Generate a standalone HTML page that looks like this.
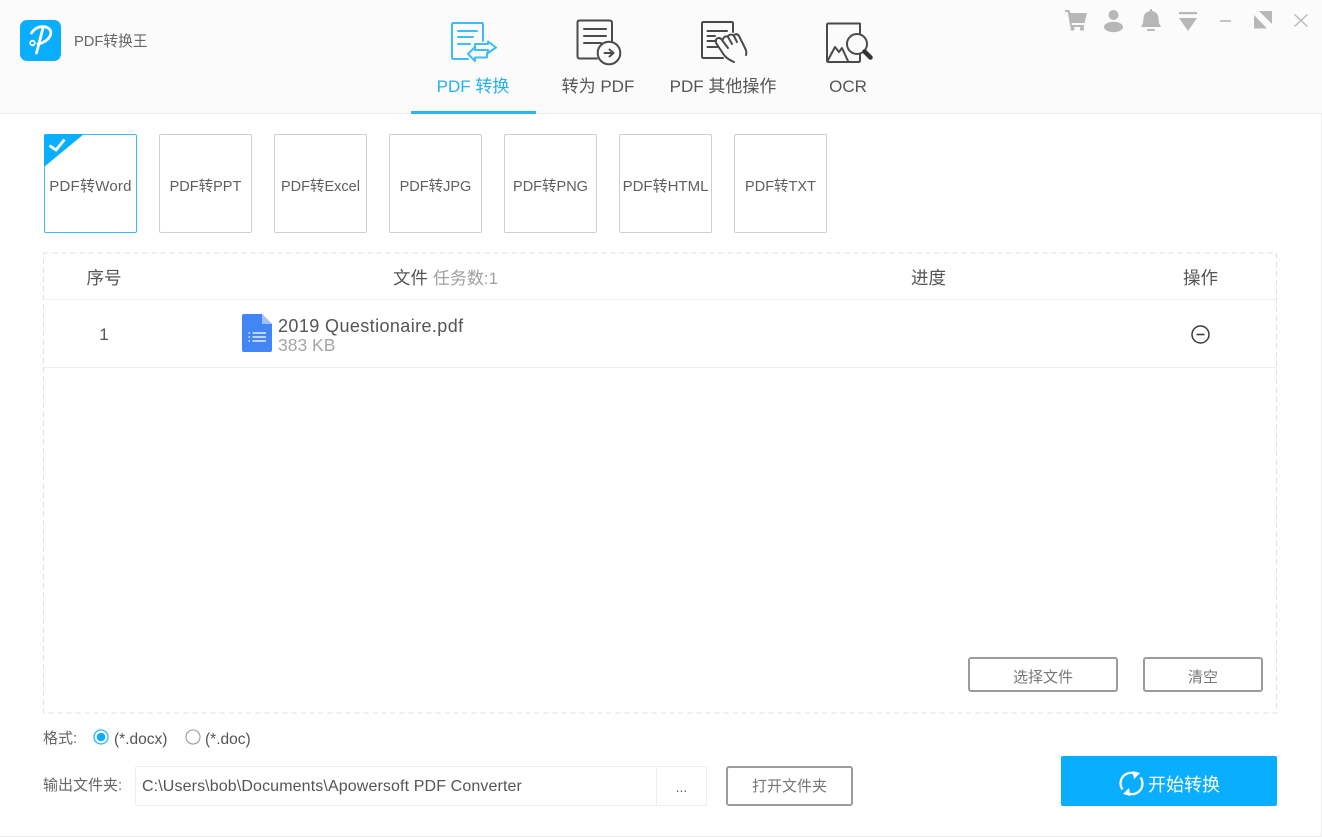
<!DOCTYPE html>
<html lang="zh"><head><meta charset="utf-8"><title>PDF转换王</title>
<style>
html,body{margin:0;padding:0;background:#fff}
body{width:1322px;height:837px;position:relative;overflow:hidden;font-family:"Liberation Sans","Noto Sans CJK SC",sans-serif;color:#555}
#w{position:absolute;left:0;top:0;width:1322px;height:837px;filter:blur(.3px)}
.a{position:absolute;white-space:nowrap}
.c{text-align:center}
.card{position:absolute;top:134px;width:91px;height:97px;border:1px solid #d0d0d0;border-radius:2px;background:#fff;text-align:center;line-height:103px;font-size:14.500px;color:#5f5f5f;white-space:nowrap;box-sizing:content-box}
.card span{position:relative;top:1px}
.btn{position:absolute;box-sizing:border-box;border:2px solid #9c9c9c;border-radius:3px;background:#fff;text-align:center;color:#777;font-size:15px}
svg{position:absolute;overflow:visible}
.s{fill:none;stroke:#4a4a4a;stroke-width:2;stroke-linecap:round;stroke-linejoin:round}
.b{fill:none;stroke:#3dbcf5;stroke-width:2;stroke-linecap:round;stroke-linejoin:round}
.g{fill:#b7b7b7}
.t{top:76px;width:124px;font-size:17px;line-height:22px;color:#555}
.h{top:267px;font-size:17.500px;line-height:22px;color:#555}
</style></head><body><div id="w">

<div class="a" style="left:0;top:0;width:1322px;height:113px;background:#fbfbfb;border-bottom:1px solid #ececec"></div>

<!-- logo -->
<svg style="left:20px;top:20px" width="41" height="41" viewBox="0 0 41 41">
<rect width="41" height="41" rx="7" fill="#0aaeff"/>
<path d="M11.500 13Q17 5 26 7Q33 10 30 16Q27 22 18 24M23 8L16.500 33" fill="none" stroke="#fff" stroke-width="2.800" stroke-linecap="round"/>
<circle cx="12.500" cy="23" r="2.300" fill="none" stroke="#fff" stroke-width="1.800"/>
</svg>
<div class="a" style="left:74px;top:33px;font-size:14.700px;line-height:18px;color:#666">PDF转换王</div>

<!-- tab icons -->
<svg style="left:450px;top:22px" width="48" height="42" viewBox="0 0 48 42">
<path class="b" d="M33 19V2.500Q33 1 31.500 1H3.500Q2 1 2 2.500V35.500Q2 37 3.500 37H18"/>
<path class="b" d="M8 9H27M8 15H23M8 22H20"/>
<path class="b" d="M25 28V22H38V19.500L46 25.500L38 31V28H25"/>
<path class="b" d="M25 28V25L18 32L25 39V35.500H37V31"/>
</svg>
<svg style="left:576px;top:19px" width="46" height="46" viewBox="0 0 46 46">
<path class="s" d="M36 22V4Q36 1.500 33.500 1.500H3.500Q1.500 1.500 1.500 3.500V37Q1.500 39.500 3.500 39.500H21"/>
<path class="s" d="M8 10H30M8 17H30M8 24H25"/>
<circle cx="33" cy="34" r="11.300" fill="#fbfbfb" stroke="#4a4a4a" stroke-width="2"/>
<path class="s" d="M28.500 34H37M33.500 30.500L37.500 34L33.500 37.500"/>
</svg>
<svg style="left:701px;top:21px" width="46" height="42" viewBox="0 0 46 42">
<path class="s" d="M32 11V2.500Q32 1 30.500 1H2.500Q1 1 1 2.500V35.500Q1 37 2.500 37H22"/>
<path class="s" d="M6.500 10H26M6.500 15H14M6.500 20H15M6.500 26H17"/>
<path class="s" d="M33 41Q26 38 23 34L15 22Q14 19 16 17.500Q19 16 21 19L27 27M22 18Q24 14 27 16L31 23M27 15Q30 12 33 15L36 21M33 14Q36 12 38 15L44 27Q46 31 45 34"/>
</svg>
<svg style="left:826px;top:22px" width="48" height="42" viewBox="0 0 48 42">
<path class="s" d="M34 1.500H2.500Q1 1.500 1 3V38.500Q1 40 2.500 40H32.500Q34 40 34 38.500V30M34 1.500V11"/>
<path class="s" d="M1.500 39L9 25L13 30L16 26L22 39"/>
<circle cx="31" cy="22" r="10" fill="#fbfbfb" stroke="#4a4a4a" stroke-width="2"/>
<path d="M38.500 29.500L44.500 35.500" stroke="#333" stroke-width="4.500" stroke-linecap="round"/>
</svg>

<!-- tab labels -->
<div class="a c t" style="left:411px;color:#24b0f2">PDF 转换</div>
<div class="a c t" style="left:536px">转为 PDF</div>
<div class="a c t" style="left:661px">PDF 其他操作</div>
<div class="a c t" style="left:786px">OCR</div>
<div class="a" style="left:411px;top:111px;width:125px;height:3px;background:#2cb5f5"></div>

<!-- window controls -->
<svg style="left:1064px;top:9px" width="24" height="22" viewBox="0 0 24 22">
<path class="g" d="M1 1H5.500L6.500 4H23L20.500 14H7.500L8 16H20V18H6.300L3.800 3H1Z"/>
<circle class="g" cx="8.500" cy="19.700" r="2"/><circle class="g" cx="18" cy="19.700" r="2"/>
</svg>
<svg style="left:1103px;top:9px" width="21" height="23" viewBox="0 0 21 23">
<circle class="g" cx="10.500" cy="6" r="5"/>
<ellipse class="g" cx="10.500" cy="18" rx="9.500" ry="5.200"/>
</svg>
<svg style="left:1140px;top:8px" width="22" height="24" viewBox="0 0 22 24">
<path class="g" d="M10 1H12V3Q18 4 18.500 10L19 15L21 19H1L3 15L3.500 10Q4 4 10 3Z"/>
<rect class="g" x="7" y="21" width="8" height="2" rx="1"/>
</svg>
<svg style="left:1178px;top:11px" width="20" height="20" viewBox="0 0 20 20">
<rect class="g" x="1" y="1" width="18" height="2.200"/>
<path class="g" d="M1 7H19L10 20Z"/>
</svg>
<div class="a" style="left:1220px;top:20px;width:11px;height:1.500px;background:#c4c4c4"></div>
<svg style="left:1254px;top:10px" width="19" height="19" viewBox="0 0 19 19">
<path class="g" d="M5 1H18V14ZM0 5L13 18.500H0Z"/>
</svg>
<svg style="left:1294px;top:14px" width="14" height="13" viewBox="0 0 14 13">
<path d="M.5 .5L13.500 12.500M13.500 .5L.5 12.500" stroke="#b9b9b9" stroke-width="1.300" fill="none"/>
</svg>

<!-- format cards -->
<div class="card" style="left:44px;border-color:#3bbcf6;font-size:15px;letter-spacing:.25px">PDF转Word</div>
<svg style="left:44px;top:134px" width="42" height="34" viewBox="0 0 42 34">
<path d="M0 2Q0 0 2 0H40L0 33Z" fill="#0aaeff"/>
<path d="M5.500 13L12 17.500L20.500 7" fill="none" stroke="#fff" stroke-width="2.800" transform="translate(0,-1.500)"/>
</svg>
<div class="card" style="left:159px"><span>PDF转PPT</span></div>
<div class="card" style="left:274px"><span>PDF转Excel</span></div>
<div class="card" style="left:389px"><span>PDF转JPG</span></div>
<div class="card" style="left:504px"><span>PDF转PNG</span></div>
<div class="card" style="left:619px;font-size:15px">PDF转HTML</div>
<div class="card" style="left:734px"><span>PDF转TXT</span></div>

<!-- table -->
<svg style="left:0;top:0" width="1322" height="837">
<rect x="43.500" y="253" width="1233" height="460" fill="none" stroke="#e0e0e0" stroke-dasharray="5 4"/>
</svg>
<div class="a" style="left:44px;top:299px;width:1232px;height:1px;background:#eeeeee"></div>
<div class="a" style="left:44px;top:367px;width:1232px;height:1px;background:#eeeeee"></div>
<div class="a c h" style="left:44px;width:120px">序号</div>
<div class="a h" style="left:393px">文件 <span style="color:#a0a0a0;font-size:17px">任务数:1</span></div>
<div class="a h" style="left:911px">进度</div>
<div class="a h" style="left:1183px">操作</div>
<div class="a c" style="left:44px;top:324px;width:120px;font-size:17px;line-height:22px;color:#555">1</div>
<svg style="left:242px;top:314px" width="30" height="38" viewBox="0 0 30 38">
<path d="M2 0H20L30 10V36Q30 38 28 38H2Q0 38 0 36V2Q0 0 2 0Z" fill="#4285f4"/>
<path d="M20 0L30 10H20Z" fill="#a1c2fa"/>
<path d="M10.500 19H24M10.500 23H24M10.500 27H24M6.500 19H8M6.500 23H8M6.500 27H8" stroke="#e6efff" stroke-width="1.500"/>
</svg>
<div class="a" style="left:278px;top:315px;font-size:18px;line-height:22px;color:#555;letter-spacing:.4px">2019 Questionaire.pdf</div>
<div class="a" style="left:278px;top:334px;font-size:17.500px;line-height:22px;color:#a6a6a6">383 KB</div>
<svg style="left:1191px;top:325px" width="19" height="19" viewBox="0 0 19 19">
<circle cx="9.500" cy="9.500" r="8.500" fill="none" stroke="#3c3c3c" stroke-width="1.500"/>
<path d="M5.500 9.500H13.500" stroke="#3c3c3c" stroke-width="1.600"/>
</svg>

<div class="btn" style="left:968px;top:657px;width:150px;height:35px;line-height:37px">选择文件</div>
<div class="btn" style="left:1143px;top:657px;width:120px;height:35px;line-height:37px">清空</div>

<!-- format row -->
<div class="a" style="left:43px;top:729px;font-size:15px;line-height:20px;color:#666">格式:</div>
<svg style="left:93px;top:729px" width="16" height="16" viewBox="0 0 16 16">
<circle cx="8" cy="8" r="7" fill="#fff" stroke="#2cb5f5" stroke-width="1.300"/><circle cx="8" cy="8" r="4.300" fill="#0aaeff"/>
</svg>
<div class="a" style="left:114px;top:729.500px;font-size:15.500px;line-height:20px;color:#555">(*.docx)</div>
<svg style="left:185px;top:729px" width="16" height="16" viewBox="0 0 16 16">
<circle cx="8" cy="8" r="7" fill="#fff" stroke="#9a9a9a" stroke-width="1.100"/>
</svg>
<div class="a" style="left:205px;top:729.500px;font-size:15.500px;line-height:20px;color:#555">(*.doc)</div>

<!-- output row -->
<div class="a" style="left:43px;top:776px;font-size:15px;line-height:20px;color:#666">输出文件夹:</div>
<div class="a" style="left:135px;top:766px;width:570px;height:38px;border:1px solid #efefef;border-radius:2px"></div>
<div class="a" style="left:656px;top:767px;width:1px;height:38px;background:#efefef"></div>
<div class="a" style="left:142px;top:777px;font-size:16px;line-height:20px;color:#555;letter-spacing:.12px">C:\Users\bob\Documents\Apowersoft PDF Converter</div>
<div class="a c" style="left:657px;top:777px;width:49px;font-size:14px;line-height:20px;color:#666">...</div>
<div class="btn" style="left:726px;top:766px;width:127px;height:40px;line-height:38px">打开文件夹</div>

<!-- start button -->
<div class="a" style="left:1061px;top:756px;width:216px;height:50px;background:#0aaeff;border-radius:2px"></div>
<svg style="left:1119px;top:771px" width="25" height="25" viewBox="0 0 25 25">
<path d="M3.500 18.500A10.500 10.500 0 0 1 15 2.300M21.500 6.500A10.500 10.500 0 0 1 10 22.700" fill="none" stroke="#fff" stroke-width="2.300"/>
<path d="M13.500 0L21 2L15 8ZM11.500 25L4 23L10 17Z" fill="#fff"/>
</svg>
<div class="a" style="left:1148px;top:773px;font-size:18px;line-height:24px;color:#fff">开始转换</div>

<div class="a" style="left:0;top:836px;width:1322px;height:1px;background:#ececec"></div>
<div class="a" style="left:1321px;top:114px;width:1px;height:723px;background:#efefef"></div>
</div></body></html>
